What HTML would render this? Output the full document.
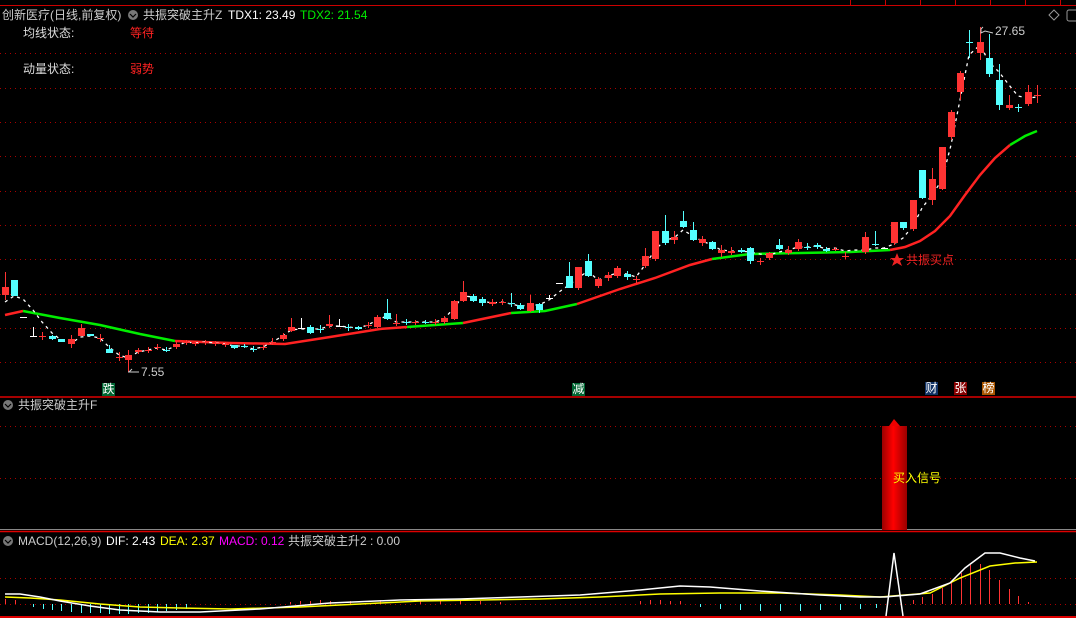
<!DOCTYPE html>
<html><head><meta charset="utf-8"><style>
html,body{margin:0;padding:0;background:#000;width:1076px;height:618px;overflow:hidden}
body{position:relative;font-family:"Liberation Sans","Noto Sans CJK SC",sans-serif;font-size:12px}
.t{position:absolute;white-space:nowrap;line-height:14px}
svg{position:absolute;left:0;top:0}
.mk{position:absolute;width:13px;height:13px;color:#fff;font-size:12px;line-height:13px;text-align:center}
</style></head><body>
<svg id="s" width="1076" height="618" xmlns="http://www.w3.org/2000/svg">
<g stroke="#c00" stroke-width="1">
<line x1="0" y1="5.5" x2="1076" y2="5.5"/>
<line x1="850.5" y1="0" x2="850.5" y2="5"/><line x1="885.5" y1="0" x2="885.5" y2="5"/><line x1="920.5" y1="0" x2="920.5" y2="5"/><line x1="955.5" y1="0" x2="955.5" y2="5"/><line x1="990.5" y1="0" x2="990.5" y2="5"/><line x1="1025.5" y1="0" x2="1025.5" y2="5"/><line x1="1060.5" y1="0" x2="1060.5" y2="5"/>
</g>
<g stroke="#a00" stroke-width="1" stroke-dasharray="1,4">
<line x1="0" y1="53.5" x2="1076" y2="53.5"/><line x1="0" y1="88.5" x2="1076" y2="88.5"/><line x1="0" y1="122.5" x2="1076" y2="122.5"/><line x1="0" y1="156.5" x2="1076" y2="156.5"/><line x1="0" y1="191.5" x2="1076" y2="191.5"/><line x1="0" y1="225.5" x2="1076" y2="225.5"/><line x1="0" y1="259.5" x2="1076" y2="259.5"/><line x1="0" y1="294.5" x2="1076" y2="294.5"/><line x1="0" y1="328.5" x2="1076" y2="328.5"/><line x1="0" y1="362.5" x2="1076" y2="362.5"/>
<line x1="0" y1="426.5" x2="1076" y2="426.5"/><line x1="0" y1="478.5" x2="1076" y2="478.5"/>
<line x1="0" y1="578.5" x2="1076" y2="578.5"/><line x1="0" y1="604.5" x2="1076" y2="604.5"/>
</g>
<line x1="0" y1="397" x2="1076" y2="397" stroke="#d00" stroke-width="1.5"/>
<line x1="0" y1="529.5" x2="1076" y2="529.5" stroke="#888" stroke-width="1"/>
<line x1="0" y1="531.5" x2="1076" y2="531.5" stroke="#d00" stroke-width="1.5"/>
<line x1="0" y1="617" x2="1076" y2="617" stroke="#d00" stroke-width="2"/>
<!-- MA line -->
<polyline fill="none" stroke="#f22" stroke-width="2.5" points="5,315 23,311"/>
<polyline fill="none" stroke="#0e0" stroke-width="2.5" points="23,311 60,318 100,325 140,334 175,341"/>
<polyline fill="none" stroke="#f22" stroke-width="2.5" points="175,341 230,343 285,344 330,337 380,329 407,327"/>
<polyline fill="none" stroke="#0e0" stroke-width="2.5" points="407,327 463,323"/>
<polyline fill="none" stroke="#f22" stroke-width="2.5" points="463,323 511,313"/>
<polyline fill="none" stroke="#0e0" stroke-width="2.5" points="511,313 545,311 577,304"/>
<polyline fill="none" stroke="#f22" stroke-width="2.5" points="577,304 620,289 655,278 690,265 712,259"/>
<polyline fill="none" stroke="#0e0" stroke-width="2.5" points="712,259 750,254 800,253 850,252 890,250"/>
<polyline fill="none" stroke="#f22" stroke-width="2.5" points="890,250 905,247 920,241 935,231 950,216 965,195 980,175 995,158 1010,145"/>
<polyline fill="none" stroke="#0e0" stroke-width="2.5" points="1010,145 1025,136 1037,131"/>
<!-- dashed close line -->
<polyline fill="none" stroke="#fff" stroke-width="1.3" stroke-dasharray="3,4" points="5,302 14,296 23,299 33,310 42,322 52,333 61,340 71,343 81,337 90,336 100,338 109,347 119,355 128,358 138,352 148,350 157,348 166,350 176,346 186,342 195,343 205,342 215,343 225,344 234,346 244,346 253,349 263,347 272,342 283,336 291,330 301,329 310,329 320,329 329,326 339,326 348,327 358,328 368,325 377,320 387,316 396,322 406,322 415,322 425,322 435,322 444,319 454,308 463,296 473,297 482,301 492,303 502,302 511,304 520,306 530,305 539,305 549,300 559,292 569,285 578,278 588,271 598,280 608,276 617,273 627,274 636,277 645,265 655,250 665,240 674,238 683,230 693,236 702,241 712,245 721,250 731,251 741,251 750,252 760,254 769,255 779,252 788,250 798,247 807,247 817,246 826,249 835,248 845,251 855,250 865,250 875,248 884,248 894,244 903,238 913,226 922,208 932,195 942,180 951,145 960,100 969,55 980,45 989,62 999,72 1009,85 1018,96 1028,98 1037,97"/>
<g id="c"></g>
<!-- labels -->
<polyline fill="none" stroke="#ccc" stroke-width="1" points="983,27 981,29 981,33 985,31 993,33"/>
<polyline fill="none" stroke="#ccc" stroke-width="1" points="128,372 138,372 M"/>
<line x1="129" y1="372" x2="139" y2="372" stroke="#ccc"/><line x1="129" y1="372" x2="132" y2="369" stroke="#ccc"/>
<!-- star -->
<polygon points="897,253 899,258 904,258 900,261 902,266 897,263 892,266 894,261 890,258 895,258" fill="#e22"/>
<!-- panel2 bar -->
<defs><linearGradient id="g" x1="0" x2="1" y1="0" y2="0"><stop offset="0" stop-color="#900"/><stop offset="0.45" stop-color="#f00"/><stop offset="1" stop-color="#900"/></linearGradient></defs>
<rect x="882" y="426" width="25" height="104" fill="url(#g)"/>
<polygon points="889,426 900,426 894,419" fill="#e00"/>
<!-- MACD -->
<g id="m"></g>
<polyline fill="none" stroke="#ff0" stroke-width="1.5" points="5,597 30,598 60,600 100,604 140,607 180,608 230,609 300,607 360,604 420,601 480,600 540,599 600,597 660,594 720,593 780,593 840,595 880,597 930,593 960,578 990,566 1015,563 1037,562"/>
<polyline fill="none" stroke="#fff" stroke-width="1.5" points="5,594 20,594 40,597 60,601 90,606 120,610 160,612 200,612 260,609 330,603 400,600 460,599 520,597 580,595 640,590 680,586 710,587 760,591 820,595 860,597 885,597 920,594 950,583 965,568 985,553 1000,553 1020,558 1035,561"/>
<polyline fill="none" stroke="#fff" stroke-width="1.5" points="886,616 894,553 903,616"/>
<!-- right icons -->
<polygon points="1054,10 1059,15 1054,20 1049,15" fill="none" stroke="#999"/>
<rect x="1067" y="10" width="12" height="11" rx="2" fill="none" stroke="#999"/>
<circle cx="133" cy="15" r="5" fill="#777"/><polyline points="130,14 133,17 136,14" fill="none" stroke="#000" stroke-width="1.2"/>
<circle cx="8" cy="405" r="5" fill="#777"/><polyline points="5,404 8,407 11,404" fill="none" stroke="#000" stroke-width="1.2"/>
<circle cx="8" cy="541" r="5" fill="#777"/><polyline points="5,540 8,543 11,540" fill="none" stroke="#000" stroke-width="1.2"/>
</svg>
<div class="t" style="left:2px;top:8px;color:#ccc">创新医疗(日线,前复权)</div>
<div class="t" style="left:143px;top:8px;color:#ccc">共振突破主升Z</div>
<div class="t" style="left:228px;top:8px;color:#fff">TDX1: 23.49</div>
<div class="t" style="left:300px;top:8px;color:#0e0">TDX2: 21.54</div>
<div class="t" style="left:23px;top:26px;color:#ddd">均线状态:</div>
<div class="t" style="left:130px;top:26px;color:#f22">等待</div>
<div class="t" style="left:23px;top:62px;color:#ddd">动量状态:</div>
<div class="t" style="left:130px;top:62px;color:#f22">弱势</div>
<div class="t" style="left:995px;top:24px;color:#ccc">27.65</div>
<div class="t" style="left:141px;top:365px;color:#ccc">7.55</div>
<div class="t" style="left:906px;top:253px;color:#e22">共振买点</div>
<div class="mk" style="left:102px;top:383px;background:#063">跌</div>
<div class="mk" style="left:572px;top:383px;background:#063">减</div>
<div class="mk" style="left:925px;top:382px;background:#136">财</div>
<div class="mk" style="left:954px;top:382px;background:#800">张</div>
<div class="mk" style="left:982px;top:382px;background:#a50">榜</div>
<div class="t" style="left:18px;top:398px;color:#ccc">共振突破主升F</div>
<div class="t" style="left:893px;top:471px;color:#ff0">买入信号</div>
<div class="t" style="left:18px;top:534px;color:#ccc">MACD(12,26,9)</div>
<div class="t" style="left:106px;top:534px;color:#fff">DIF: 2.43</div>
<div class="t" style="left:160px;top:534px;color:#ff0">DEA: 2.37</div>
<div class="t" style="left:219px;top:534px;color:#f0f">MACD: 0.12</div>
<div class="t" style="left:288px;top:534px;color:#ccc">共振突破主升2 : 0.00</div>
<script>
var d=[[5,287,295,272,300,'r'],[14,280,296,280,296,'c'],[23,317,318,317,318,'w'],[33,336,337,327,337,'w'],[42,336,337,332,340,'r'],[52,336,339,335,340,'c'],[61,339,342,339,342,'c'],[71,339,344,335,348,'r'],[81,328,336,324,336,'r'],[90,334,336,334,336,'c'],[100,338,339,334,342,'r'],[109,349,353,345,353,'c'],[119,357,358,352,361,'r'],[128,355,360,350,372,'r'],[138,350,352,348,354,'r'],[148,350,351,347,353,'r'],[157,347,348,344,350,'r'],[166,350,351,347,352,'c'],[176,344,347,341,349,'r'],[186,342,343,340,345,'r'],[195,343,344,341,346,'r'],[205,342,343,340,345,'r'],[215,343,344,341,346,'r'],[225,344,345,342,347,'r'],[234,345,348,345,349,'c'],[244,346,347,344,348,'c'],[253,349,350,346,352,'c'],[263,347,348,345,350,'r'],[272,342,343,338,345,'r'],[283,335,339,333,341,'r'],[291,327,331,318,332,'r'],[301,328,329,318,329,'w'],[310,327,333,325,334,'c'],[320,329,330,325,333,'c'],[329,324,326,315,328,'r'],[339,326,327,319,327,'w'],[348,327,328,324,331,'c'],[358,327,329,326,330,'c'],[368,325,326,322,328,'r'],[377,317,327,315,328,'r'],[387,313,319,299,320,'c'],[396,323,324,314,326,'r'],[406,322,323,319,325,'c'],[415,322,323,320,325,'r'],[425,322,323,320,324,'c'],[435,322,323,319,325,'r'],[444,318,322,316,324,'r'],[454,301,319,300,320,'r'],[463,292,301,281,302,'r'],[473,296,301,294,302,'c'],[482,299,303,297,306,'c'],[492,302,304,299,306,'r'],[502,302,303,299,305,'r'],[511,303,304,293,307,'c'],[520,305,309,303,310,'c'],[530,303,311,295,312,'r'],[539,304,310,303,313,'c'],[549,298,299,295,299,'w'],[559,283,284,283,284,'w'],[569,276,288,262,288,'c'],[578,267,288,267,290,'r'],[588,261,276,254,277,'c'],[598,279,286,277,288,'r'],[608,275,278,272,281,'r'],[617,268,276,266,278,'r'],[627,274,277,271,280,'c'],[636,279,280,276,283,'r'],[645,256,266,248,268,'r'],[655,231,259,231,261,'r'],[665,231,243,215,245,'c'],[674,237,240,231,244,'r'],[683,221,227,211,228,'c'],[693,230,240,222,241,'c'],[702,239,243,236,246,'r'],[712,242,249,241,250,'c'],[721,250,253,245,257,'r'],[731,251,253,247,255,'r'],[741,250,252,248,253,'c'],[750,248,261,247,264,'c'],[760,261,262,258,265,'r'],[769,253,258,252,260,'r'],[779,245,249,239,250,'c'],[788,250,253,246,255,'r'],[798,242,249,239,251,'r'],[807,247,248,243,250,'c'],[817,245,247,243,249,'c'],[826,249,251,247,252,'c'],[835,249,250,247,251,'r'],[845,256,257,252,259,'r'],[865,237,252,232,254,'r'],[875,244,245,231,246,'c'],[884,248,249,248,249,'w'],[894,222,243,222,245,'r'],[903,222,228,222,230,'c'],[913,200,229,200,231,'r'],[922,170,198,170,199,'c'],[932,179,200,168,205,'r'],[942,147,189,147,190,'r'],[951,112,137,110,140,'r'],[960,73,92,71,100,'r'],[969,42,43,30,58,'c'],[980,42,53,27,60,'r'],[989,58,74,34,77,'c'],[999,80,105,64,110,'c'],[1009,105,108,95,110,'r'],[1018,107,108,104,112,'c'],[1028,92,104,85,106,'r'],[1037,95,96,85,103,'r']];
var col={r:'#ff3333',c:'#54ffff',w:'#ffffff'},h='';
d.forEach(function(a){var c=col[a[5]];h+='<line x1="'+(a[0]+.5)+'" y1="'+a[3]+'" x2="'+(a[0]+.5)+'" y2="'+a[4]+'" stroke="'+c+'"/>';h+='<rect x="'+(a[0]-3)+'" y="'+a[1]+'" width="7" height="'+Math.max(1,a[2]-a[1])+'" fill="'+c+'"/>';});
document.getElementById('c').innerHTML=h;
var m='';
var neg=[[33,607],[43,609],[52,610],[61,611],[71,612],[81,613],[90,613],[100,613],[109,614],[119,614],[128,614],[138,613],[148,613],[157,612],[166,611],[176,610],[186,609]];
neg.forEach(function(a){m+='<line x1="'+a[0]+'.5" y1="604" x2="'+a[0]+'.5" y2="'+a[1]+'" stroke="#54ffff"/>';});
var ncy=[[700,607],[720,609],[740,610],[760,611],[780,611],[800,611],[820,610],[840,610],[860,609],[876,608]];
ncy.forEach(function(a){m+='<line x1="'+a[0]+'.5" y1="604" x2="'+a[0]+'.5" y2="'+a[1]+'" stroke="#54ffff"/>';});
var pos=[[5,599],[15,600],[290,602],[300,601],[310,601],[320,600],[330,601],[350,601],[380,601],[420,600],[440,601],[460,601],[480,601],[500,602],[640,601],[650,600],[660,600],[670,601],[680,601],[913,600],[922,597],[932,594],[942,588],[951,581],[961,573],[970,565],[980,564],[989,570],[999,580],[1009,589],[1018,596],[1028,602]];
pos.forEach(function(a){m+='<line x1="'+a[0]+'.5" y1="'+a[1]+'" x2="'+a[0]+'.5" y2="604" stroke="#f33"/>';});
document.getElementById('m').innerHTML=m;
</script>
</body></html>
